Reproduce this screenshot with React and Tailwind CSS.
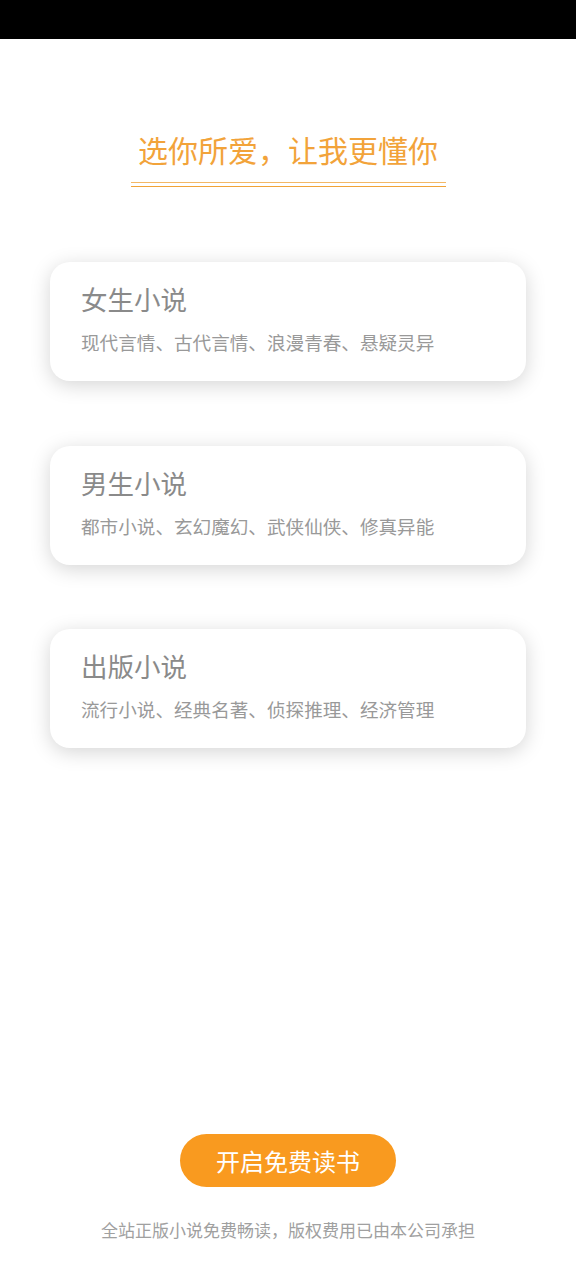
import React from 'react';

const font = { fontFamily: '"Noto Sans CJK SC", "Noto Sans", sans-serif' };

const categories = [
    { title: '女生小说', tags: '现代言情、古代言情、浪漫青春、悬疑灵异' },
    { title: '男生小说', tags: '都市小说、玄幻魔幻、武侠仙侠、修真异能' },
    { title: '出版小说', tags: '流行小说、经典名著、侦探推理、经济管理' },
];

function CategoryCard({ title, tags }) {
    return (
        <div className="w-[476px] h-[119px] bg-white rounded-[20px] shadow-[0_4px_20px_rgba(0,0,0,0.17)] pl-[31px] pt-[19px]">
            <div className="text-[26.5px] leading-[36px] text-[#8a8a8a]">{title}</div>
            <div className="mt-[12px] text-[18.6px] leading-[26px] text-[#999999]">{tags}</div>
        </div>
    );
}

export default function App() {
    return (
        <div className="w-[576px] h-[1280px] bg-white flex flex-col" style={font}>
            {/* 状态栏 */}
            <div className="h-[39px] bg-black shrink-0" />

            {/* 标题 */}
            <div className="flex flex-col items-center mt-[89px]">
                <h1 className="text-[30px] leading-[42px] text-[#f2a33a]">选你所爱，让我更懂你</h1>
                <div className="w-[315px] mt-[12px] flex flex-col gap-[3px]">
                    <div className="h-px bg-[#f3b865]" />
                    <div className="h-px bg-[#f0a338]" />
                </div>
            </div>

            {/* 分类卡片 */}
            <div className="flex flex-col items-center gap-[64.5px] mt-[75px]">
                {categories.map(c => (
                    <CategoryCard key={c.title} title={c.title} tags={c.tags} />
                ))}
            </div>

            <div className="flex-1" />

            {/* 底部按钮 */}
            <div className="flex flex-col items-center pb-[38px]">
                <button className="w-[216px] h-[53px] rounded-full bg-[#f99a1f] text-white text-[24px] leading-none">
                    开启免费读书
                </button>
                <p className="mt-[31px] text-[17px] leading-[24px] text-[#a0a0a0]">全站正版小说免费畅读，版权费用已由本公司承担</p>
            </div>
        </div>
    );
}
